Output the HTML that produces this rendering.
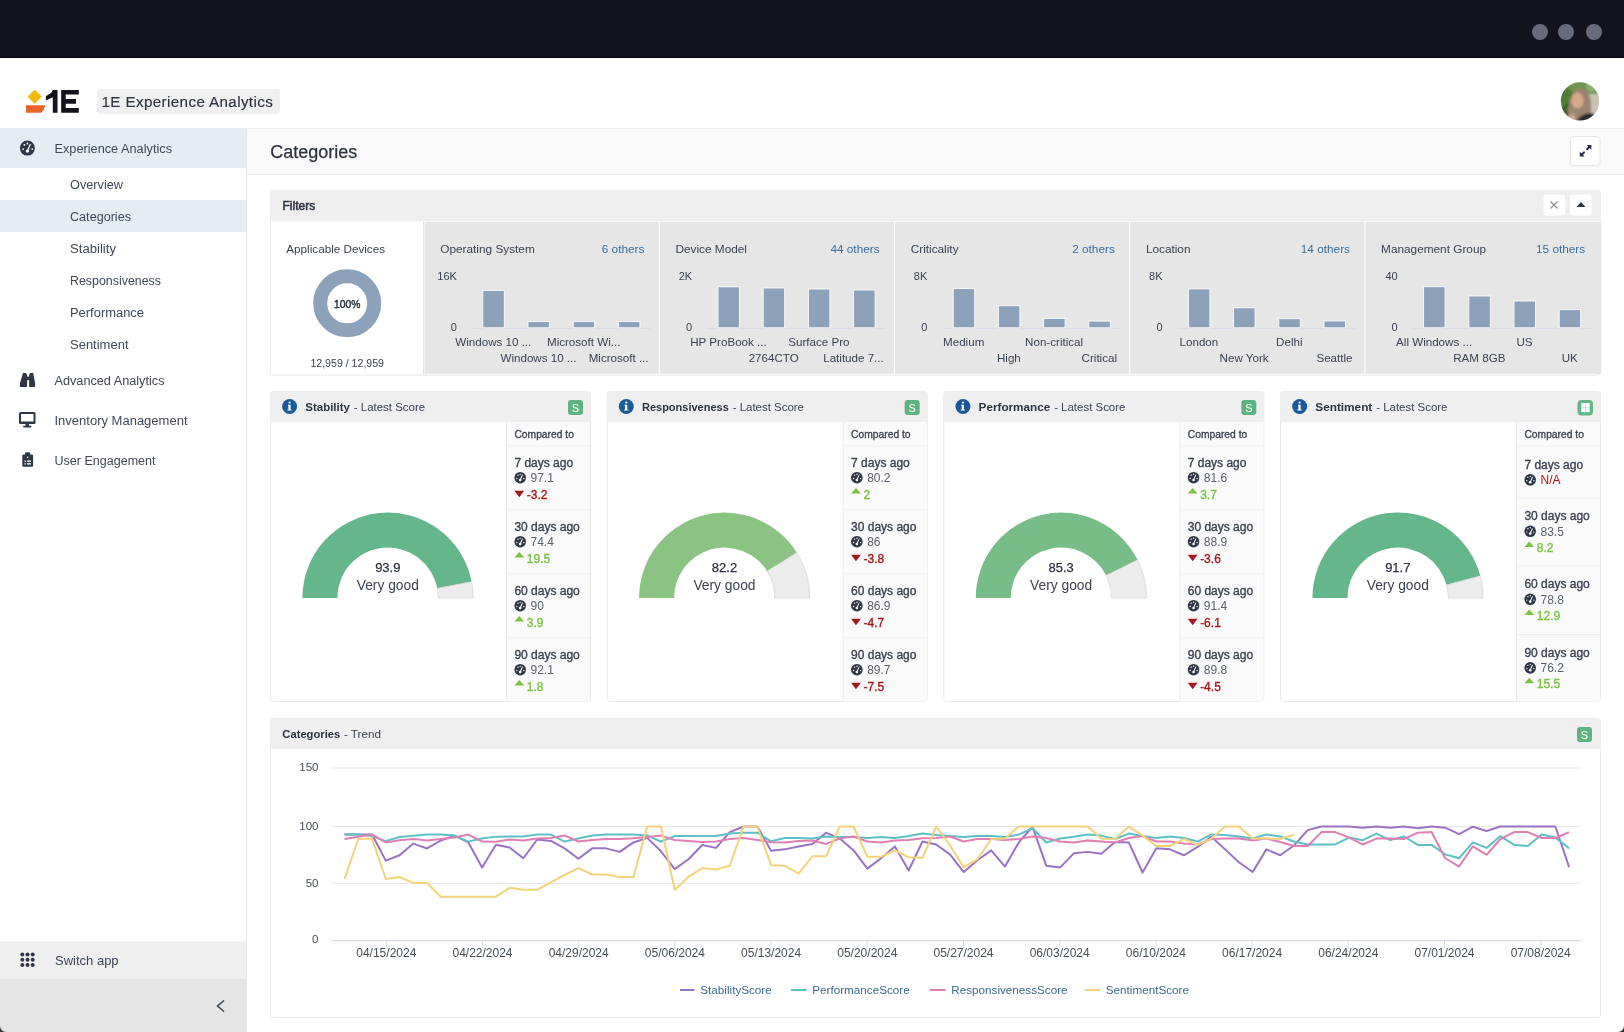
<!DOCTYPE html>
<html><head><meta charset="utf-8"><title>Categories</title>
<style>
*{margin:0;padding:0;box-sizing:border-box}
html,body{width:1624px;height:1032px;overflow:hidden;background:#fff}
svg{display:block;font-family:"Liberation Sans", sans-serif;will-change:transform}
</style></head><body>
<svg width="1624" height="1032" viewBox="0 0 1624 1032">
<rect x="0" y="0" width="1624" height="58" fill="#12131e" rx="0" />
<rect x="0" y="57" width="1624" height="1" fill="#070710" rx="0" />
<circle cx="1540" cy="32" r="8" fill="#676b7e"/>
<circle cx="1566" cy="32" r="8" fill="#676b7e"/>
<circle cx="1594" cy="32" r="8" fill="#676b7e"/>
<rect x="0" y="58" width="1624" height="70" fill="#ffffff" rx="0" />
<polygon points="34.7,90 41.3,96.7 34.7,103.4 28.1,96.7" fill="#f8b80a" stroke="#f8b80a" stroke-width="0.8" stroke-linejoin="round"/>
<path d="M26,105.3 H44.9 V106.5 Q44.5,110 41,112.7 H26 Z" fill="#e6632a"/>
<polygon points="45.9,96.3 51.5,92.5 52.8,90 57.5,90 57.5,112.7 52.8,112.7 52.8,97.2 45.9,100.4" fill="#13131d"/>
<path d="M61.2,90 H78.8 V94.6 H65.7 V99.1 H76 V103.8 H65.7 V108.1 H78.8 V112.7 H61.2 Z" fill="#13131d"/>
<rect x="97" y="89" width="183" height="25" fill="#f0f0f0" rx="4" />
<text x="101.5" y="107.3" font-size="15.2" fill="#2d3340" font-weight="400" text-anchor="start" stroke="#2d3340" stroke-width="0.15" letter-spacing="0.38">1E Experience Analytics</text>
<defs><clipPath id="av"><circle cx="1580" cy="101.4" r="19.2"/></clipPath>
<filter id="blur1"><feGaussianBlur stdDeviation="1.1"/></filter></defs>
<g clip-path="url(#av)"><g filter="url(#blur1)">
<rect x="1555" y="76" width="50" height="50" fill="#6d9650"/>
<circle cx="1566" cy="96" r="8" fill="#4f7d34"/><circle cx="1568" cy="110" r="7" fill="#3c6428"/>
<circle cx="1592" cy="86" r="6" fill="#8fae6a"/><rect x="1589" y="94" width="12" height="22" fill="#c8c2b3"/>
<path d="M1568,122 Q1566,96 1578,88 Q1590,88 1591,104 Q1592,118 1586,122 Z" fill="#9c8270"/>
<ellipse cx="1577.5" cy="100.5" rx="6" ry="8" fill="#d2aa8c"/>
<path d="M1574,126 Q1578,114 1590,113 Q1600,114 1601,126 Z" fill="#2f2b2e"/>
<path d="M1566,126 Q1568,114 1574,113 L1578,126 Z" fill="#c2a893"/>
</g></g>
<rect x="0" y="128" width="246" height="904" fill="#ffffff" rx="0" />
<rect x="246" y="128" width="1" height="904" fill="#e8e8e8" rx="0" />
<rect x="0" y="128" width="246" height="40" fill="#e5ecf3" rx="0" />
<rect x="0" y="200" width="246" height="32" fill="#e5ecf3" rx="0" />
<text x="54.5" y="153" font-size="12.5" fill="#3f4858" font-weight="400" text-anchor="start" textLength="117.5" lengthAdjust="spacingAndGlyphs" >Experience Analytics</text>
<text x="70" y="189.4" font-size="12.5" fill="#3f4858" font-weight="400" text-anchor="start" textLength="53" lengthAdjust="spacingAndGlyphs" >Overview</text>
<text x="70" y="221.4" font-size="12.5" fill="#3f4858" font-weight="400" text-anchor="start" textLength="61" lengthAdjust="spacingAndGlyphs" >Categories</text>
<text x="70" y="253.4" font-size="12.5" fill="#3f4858" font-weight="400" text-anchor="start" textLength="46" lengthAdjust="spacingAndGlyphs" >Stability</text>
<text x="70" y="285.4" font-size="12.5" fill="#3f4858" font-weight="400" text-anchor="start" textLength="91" lengthAdjust="spacingAndGlyphs" >Responsiveness</text>
<text x="70" y="317.4" font-size="12.5" fill="#3f4858" font-weight="400" text-anchor="start" textLength="74" lengthAdjust="spacingAndGlyphs" >Performance</text>
<text x="70" y="349.4" font-size="12.5" fill="#3f4858" font-weight="400" text-anchor="start" textLength="58.5" lengthAdjust="spacingAndGlyphs" >Sentiment</text>
<text x="54.5" y="385" font-size="12.5" fill="#3f4858" font-weight="400" text-anchor="start" textLength="110" lengthAdjust="spacingAndGlyphs" >Advanced Analytics</text>
<text x="54.5" y="425" font-size="12.5" fill="#3f4858" font-weight="400" text-anchor="start" textLength="133" lengthAdjust="spacingAndGlyphs" >Inventory Management</text>
<text x="54.5" y="465" font-size="12.5" fill="#3f4858" font-weight="400" text-anchor="start" textLength="101" lengthAdjust="spacingAndGlyphs" >User Engagement</text>
<g transform="translate(27.4,148.1) scale(1.0)"><circle r="7.5" fill="#2f3747"/><circle cx="-4.3" cy="1" r="0.9" fill="#fff"/><circle cx="-3" cy="-3.3" r="0.9" fill="#fff"/><circle cx="0" cy="-4.6" r="0.9" fill="#fff"/><circle cx="4.8" cy="1" r="0.9" fill="#fff"/><path d="M2.8,-3.5 L0.6,1.6" stroke="#fff" stroke-width="1.3" stroke-linecap="round"/><circle cx="0" cy="3" r="1.7" fill="#fff"/></g>
<g fill="#2f3747"><path d="M23,373 h3.2 l0.9,2.2 V387 h-7.1 V383 z"/><path d="M29.1,375.2 l0.9,-2.2 h3.2 l1.9,10 V387 h-6 z"/><rect x="26.8" y="376.6" width="2.6" height="3.6"/></g>
<g fill="#2f3747"><rect x="19" y="412" width="16.5" height="12" rx="1.5"/><rect x="21" y="414" width="12.5" height="7.5" fill="#fff"/><rect x="25.5" y="424" width="3.5" height="2"/><rect x="23" y="425.8" width="8.5" height="1.6" rx="0.8"/></g>
<g><rect x="22.3" y="454.5" width="10.8" height="12.2" rx="1.2" fill="#2f3747"/><rect x="25.2" y="452.2" width="5" height="3.5" rx="1.2" fill="#2f3747"/><g fill="#fff"><rect x="24.5" y="460.5" width="1.3" height="1.3"/><rect x="27" y="460.5" width="4" height="1.3"/><rect x="24.5" y="463.2" width="1.3" height="1.3"/><rect x="27" y="463.2" width="4" height="1.3"/><rect x="27.2" y="456.5" width="1" height="1.6"/></g></g>
<rect x="0" y="941.5" width="246" height="37" fill="#efefef" rx="0" />
<rect x="0" y="978.5" width="246" height="53.5" fill="#e5e5e5" rx="0" />
<circle cx="22.3" cy="954.5" r="2" fill="#2f3747"/>
<circle cx="27.5" cy="954.5" r="2" fill="#2f3747"/>
<circle cx="32.7" cy="954.5" r="2" fill="#2f3747"/>
<circle cx="22.3" cy="959.7" r="2" fill="#2f3747"/>
<circle cx="27.5" cy="959.7" r="2" fill="#2f3747"/>
<circle cx="32.7" cy="959.7" r="2" fill="#2f3747"/>
<circle cx="22.3" cy="964.9" r="2" fill="#2f3747"/>
<circle cx="27.5" cy="964.9" r="2" fill="#2f3747"/>
<circle cx="32.7" cy="964.9" r="2" fill="#2f3747"/>
<text x="55" y="965" font-size="13" fill="#3f4858" font-weight="400" text-anchor="start" >Switch app</text>
<path d="M224,1000.5 L217.5,1006 L224,1011.5" fill="none" stroke="#3a4250" stroke-width="1.5"/>
<rect x="247" y="128" width="1377" height="47" fill="#f9f9f9" rx="0" />
<rect x="247" y="128" width="1377" height="1" fill="#ececec" rx="0" />
<rect x="247" y="174" width="1377" height="1" fill="#e6e6e6" rx="0" />
<text x="270.3" y="158.2" font-size="18" fill="#2d3340" font-weight="400" text-anchor="start" stroke="#2d3340" stroke-width="0.25" >Categories</text>
<rect x="1570.5" y="136.5" width="29.5" height="29" fill="#ffffff" rx="3" stroke="#e6e6e6" stroke-width="1"/>
<g fill="#262a44"><polygon points="1586.6,145 1591.4,145 1591.4,149.8"/><polygon points="1579.8,151.8 1579.8,156.6 1584.6,156.6"/><path d="M1589.6,146.8 L1587.2,149.2 M1581.6,154.8 L1584,152.4" stroke="#262a44" stroke-width="2" stroke-linecap="round"/></g>
<!--MAIN-->
<rect x="270.5" y="190.5" width="1330" height="184.6" rx="3" fill="#fff" stroke="#e9e9e9"/>
<path d="M270,193 a3,3 0 0 1 3,-3 H1598 a3,3 0 0 1 3,3 V221.5 H270 Z" fill="#efefef"/>
<text x="282.5" y="209.5" font-size="12" fill="#2d3340" font-weight="400" text-anchor="start" stroke="#2d3340" stroke-width="0.55" >Filters</text>
<rect x="1543.5" y="194.5" width="21.5" height="21" fill="#ffffff" rx="3" />
<path d="M1550.5,201.5 L1557.5,208.5 M1557.5,201.5 L1550.5,208.5" stroke="#8a8a8a" stroke-width="1.1"/>
<rect x="1570" y="194.5" width="21.5" height="21" fill="#ffffff" rx="3" />
<polygon points="1576.5,207 1585.5,207 1581,202" fill="#2d3340"/>
<text x="286.3" y="253.3" font-size="11.7" fill="#3b4250" font-weight="400" text-anchor="start" >Applicable Devices</text>
<circle cx="347.2" cy="303.3" r="27" fill="none" stroke="#8ca2bb" stroke-width="14"/>
<text x="347.2" y="308" font-size="10.3" fill="#2d3340" font-weight="400" text-anchor="middle" stroke="#2d3340" stroke-width="0.45" >100%</text>
<text x="347.2" y="366.5" font-size="10.6" fill="#3b4250" font-weight="400" text-anchor="middle" >12,959 / 12,959</text>
<rect x="424.60" y="222" width="234.2" height="151.8" fill="#e6e6e6" rx="0" />
<rect x="423.1" y="222" width="1" height="152" fill="#e2e2e2" rx="0" />
<text x="440.3" y="252.9" font-size="11.8" fill="#3b4250" font-weight="400" text-anchor="start" >Operating System</text>
<text x="644.4000000000001" y="252.9" font-size="11.8" fill="#3a6f9f" font-weight="400" text-anchor="end" >6 others</text>
<text x="456.90000000000003" y="280.2" font-size="11" fill="#3b4250" font-weight="400" text-anchor="end" >16K</text>
<text x="456.90000000000003" y="330.5" font-size="11" fill="#3b4250" font-weight="400" text-anchor="end" >0</text>
<rect x="472.1" y="327.8" width="178.5" height="1" fill="#d6dce6" rx="0" />
<rect x="482.80" y="290.60" width="21.5" height="37.20" fill="#8ca2bb" stroke="#fbfcff" stroke-width="0.9"/>
<text x="493.30" y="346" font-size="11.6" fill="#3b4250" font-weight="400" text-anchor="middle" >Windows 10 ...</text>
<rect x="528.00" y="321.60" width="21.5" height="6.20" fill="#8ca2bb" stroke="#fbfcff" stroke-width="0.9"/>
<text x="538.50" y="361.5" font-size="11.6" fill="#3b4250" font-weight="400" text-anchor="middle" >Windows 10 ...</text>
<rect x="573.20" y="321.60" width="21.5" height="6.20" fill="#8ca2bb" stroke="#fbfcff" stroke-width="0.9"/>
<text x="583.70" y="346" font-size="11.6" fill="#3b4250" font-weight="400" text-anchor="middle" >Microsoft Wi...</text>
<rect x="618.40" y="321.60" width="21.5" height="6.20" fill="#8ca2bb" stroke="#fbfcff" stroke-width="0.9"/>
<text x="618.63" y="361.5" font-size="11.6" fill="#3b4250" font-weight="400" text-anchor="middle" >Microsoft ...</text>
<rect x="659.80" y="222" width="234.2" height="151.8" fill="#e6e6e6" rx="0" />
<text x="675.5" y="252.9" font-size="11.8" fill="#3b4250" font-weight="400" text-anchor="start" >Device Model</text>
<text x="879.5999999999999" y="252.9" font-size="11.8" fill="#3a6f9f" font-weight="400" text-anchor="end" >44 others</text>
<text x="692.0999999999999" y="280.2" font-size="11" fill="#3b4250" font-weight="400" text-anchor="end" >2K</text>
<text x="692.0999999999999" y="330.5" font-size="11" fill="#3b4250" font-weight="400" text-anchor="end" >0</text>
<rect x="707.3" y="327.8" width="178.5" height="1" fill="#d6dce6" rx="0" />
<rect x="718.00" y="286.80" width="21.5" height="41.00" fill="#8ca2bb" stroke="#fbfcff" stroke-width="0.9"/>
<text x="728.50" y="346" font-size="11.6" fill="#3b4250" font-weight="400" text-anchor="middle" >HP ProBook ...</text>
<rect x="763.20" y="288.00" width="21.5" height="39.80" fill="#8ca2bb" stroke="#fbfcff" stroke-width="0.9"/>
<text x="773.70" y="361.5" font-size="11.6" fill="#3b4250" font-weight="400" text-anchor="middle" >2764CTO</text>
<rect x="808.40" y="289.00" width="21.5" height="38.80" fill="#8ca2bb" stroke="#fbfcff" stroke-width="0.9"/>
<text x="818.90" y="346" font-size="11.6" fill="#3b4250" font-weight="400" text-anchor="middle" >Surface Pro</text>
<rect x="853.60" y="290.00" width="21.5" height="37.80" fill="#8ca2bb" stroke="#fbfcff" stroke-width="0.9"/>
<text x="853.49" y="361.5" font-size="11.6" fill="#3b4250" font-weight="400" text-anchor="middle" >Latitude 7...</text>
<rect x="895.00" y="222" width="234.2" height="151.8" fill="#e6e6e6" rx="0" />
<text x="910.7" y="252.9" font-size="11.8" fill="#3b4250" font-weight="400" text-anchor="start" >Criticality</text>
<text x="1114.8" y="252.9" font-size="11.8" fill="#3a6f9f" font-weight="400" text-anchor="end" >2 others</text>
<text x="927.3" y="280.2" font-size="11" fill="#3b4250" font-weight="400" text-anchor="end" >8K</text>
<text x="927.3" y="330.5" font-size="11" fill="#3b4250" font-weight="400" text-anchor="end" >0</text>
<rect x="942.5" y="327.8" width="178.5" height="1" fill="#d6dce6" rx="0" />
<rect x="953.20" y="288.60" width="21.5" height="39.20" fill="#8ca2bb" stroke="#fbfcff" stroke-width="0.9"/>
<text x="963.70" y="346" font-size="11.6" fill="#3b4250" font-weight="400" text-anchor="middle" >Medium</text>
<rect x="998.40" y="305.70" width="21.5" height="22.10" fill="#8ca2bb" stroke="#fbfcff" stroke-width="0.9"/>
<text x="1008.90" y="361.5" font-size="11.6" fill="#3b4250" font-weight="400" text-anchor="middle" >High</text>
<rect x="1043.60" y="318.40" width="21.5" height="9.40" fill="#8ca2bb" stroke="#fbfcff" stroke-width="0.9"/>
<text x="1054.10" y="346" font-size="11.6" fill="#3b4250" font-weight="400" text-anchor="middle" >Non-critical</text>
<rect x="1088.80" y="321.10" width="21.5" height="6.70" fill="#8ca2bb" stroke="#fbfcff" stroke-width="0.9"/>
<text x="1099.30" y="361.5" font-size="11.6" fill="#3b4250" font-weight="400" text-anchor="middle" >Critical</text>
<rect x="1130.20" y="222" width="234.2" height="151.8" fill="#e6e6e6" rx="0" />
<text x="1145.8999999999999" y="252.9" font-size="11.8" fill="#3b4250" font-weight="400" text-anchor="start" >Location</text>
<text x="1349.9999999999998" y="252.9" font-size="11.8" fill="#3a6f9f" font-weight="400" text-anchor="end" >14 others</text>
<text x="1162.4999999999998" y="280.2" font-size="11" fill="#3b4250" font-weight="400" text-anchor="end" >8K</text>
<text x="1162.4999999999998" y="330.5" font-size="11" fill="#3b4250" font-weight="400" text-anchor="end" >0</text>
<rect x="1177.6999999999998" y="327.8" width="178.5" height="1" fill="#d6dce6" rx="0" />
<rect x="1188.40" y="288.90" width="21.5" height="38.90" fill="#8ca2bb" stroke="#fbfcff" stroke-width="0.9"/>
<text x="1198.90" y="346" font-size="11.6" fill="#3b4250" font-weight="400" text-anchor="middle" >London</text>
<rect x="1233.60" y="307.80" width="21.5" height="20.00" fill="#8ca2bb" stroke="#fbfcff" stroke-width="0.9"/>
<text x="1244.10" y="361.5" font-size="11.6" fill="#3b4250" font-weight="400" text-anchor="middle" >New York</text>
<rect x="1278.80" y="318.70" width="21.5" height="9.10" fill="#8ca2bb" stroke="#fbfcff" stroke-width="0.9"/>
<text x="1289.30" y="346" font-size="11.6" fill="#3b4250" font-weight="400" text-anchor="middle" >Delhi</text>
<rect x="1324.00" y="320.90" width="21.5" height="6.90" fill="#8ca2bb" stroke="#fbfcff" stroke-width="0.9"/>
<text x="1334.50" y="361.5" font-size="11.6" fill="#3b4250" font-weight="400" text-anchor="middle" >Seattle</text>
<rect x="1365.40" y="222" width="236" height="151.8" fill="#e6e6e6" rx="0" />
<text x="1381.1000000000001" y="252.9" font-size="11.8" fill="#3b4250" font-weight="400" text-anchor="start" >Management Group</text>
<text x="1585.2" y="252.9" font-size="11.8" fill="#3a6f9f" font-weight="400" text-anchor="end" >15 others</text>
<text x="1397.7" y="280.2" font-size="11" fill="#3b4250" font-weight="400" text-anchor="end" >40</text>
<text x="1397.7" y="330.5" font-size="11" fill="#3b4250" font-weight="400" text-anchor="end" >0</text>
<rect x="1412.9" y="327.8" width="178.5" height="1" fill="#d6dce6" rx="0" />
<rect x="1423.60" y="286.70" width="21.5" height="41.10" fill="#8ca2bb" stroke="#fbfcff" stroke-width="0.9"/>
<text x="1434.10" y="346" font-size="11.6" fill="#3b4250" font-weight="400" text-anchor="middle" >All Windows ...</text>
<rect x="1468.80" y="296.00" width="21.5" height="31.80" fill="#8ca2bb" stroke="#fbfcff" stroke-width="0.9"/>
<text x="1479.30" y="361.5" font-size="11.6" fill="#3b4250" font-weight="400" text-anchor="middle" >RAM 8GB</text>
<rect x="1514.00" y="301.00" width="21.5" height="26.80" fill="#8ca2bb" stroke="#fbfcff" stroke-width="0.9"/>
<text x="1524.50" y="346" font-size="11.6" fill="#3b4250" font-weight="400" text-anchor="middle" >US</text>
<rect x="1559.20" y="309.70" width="21.5" height="18.10" fill="#8ca2bb" stroke="#fbfcff" stroke-width="0.9"/>
<text x="1569.70" y="361.5" font-size="11.6" fill="#3b4250" font-weight="400" text-anchor="middle" >UK</text>
<rect x="270.50" y="391.5" width="320" height="310" rx="3" fill="#fff" stroke="#e9e9e9"/>
<path d="M270.00,394.5 a3,3 0 0 1 3,-3 H588.00 a3,3 0 0 1 3,3 V422.2 H270.00 Z" fill="#efefef"/>
<circle cx="289.60" cy="406.5" r="7.5" fill="#1b5a98"/>
<g fill="#fff"><circle cx="289.60" cy="402.6" r="1.1"/><path d="M288.00,404.8 h2.6 v4.6 h1 v1.2 h-4.2 v-1.2 h1 v-3.4 h-0.4 z"/></g>
<text x="305.30" y="411.2" font-size="11.6" fill="#2d3340" font-weight="700" text-anchor="start" textLength="44.6" lengthAdjust="spacingAndGlyphs" >Stability</text>
<text x="353.80" y="411.2" font-size="11.75" fill="#3b4250" font-weight="400" text-anchor="start" textLength="71.3" lengthAdjust="spacingAndGlyphs" >- Latest Score</text>
<rect x="568.00" y="400" width="15" height="15" fill="#5fb383" rx="3" />
<text x="575.50" y="411.8" font-size="11" fill="#ffffff" font-weight="400" text-anchor="middle" >S</text>
<path d="M302.40,598 A85.4,85.4 0 0 1 471.64,581.73 L437.28,588.40 A50.4,50.4 0 0 0 337.40,598 Z" fill="#65b68b"/>
<path d="M471.64,581.73 A85.4,85.4 0 0 1 473.20,598 L438.20,598 A50.4,50.4 0 0 0 437.28,588.40 Z" fill="#ececec" stroke="#d9d9de" stroke-width="0.8"/>
<text x="387.80" y="571.5" font-size="13" fill="#2d3340" font-weight="400" text-anchor="middle" stroke="#2d3340" stroke-width="0.25" >93.9</text>
<text x="387.80" y="589.5" font-size="13.8" fill="#3b4250" font-weight="400" text-anchor="middle" >Very good</text>
<rect x="506.00" y="422.2" width="84" height="279.3" fill="#fafafa" rx="0" />
<rect x="506.00" y="422.2" width="1" height="279.3" fill="#ececec" rx="0" />
<text x="514.40" y="437.6" font-size="10.3" fill="#3b4250" font-weight="400" text-anchor="start" stroke="#3b4250" stroke-width="0.3" >Compared to</text>
<rect x="507.00" y="445.5" width="83" height="1" fill="#efefef" rx="0" />
<rect x="507.00" y="509.5" width="83" height="1" fill="#efefef" rx="0" />
<rect x="507.00" y="573.5" width="83" height="1" fill="#efefef" rx="0" />
<rect x="507.00" y="637.5" width="83" height="1" fill="#efefef" rx="0" />
<text x="514.40" y="466.5" font-size="12" fill="#3b4250" font-weight="400" text-anchor="start" stroke="#3b4250" stroke-width="0.35" >7 days ago</text>
<g transform="translate(520.2,477.7) scale(0.7733333333333333)"><circle r="7.5" fill="#2f3747"/><circle cx="-4.3" cy="1" r="0.9" fill="#fff"/><circle cx="-3" cy="-3.3" r="0.9" fill="#fff"/><circle cx="0" cy="-4.6" r="0.9" fill="#fff"/><circle cx="4.8" cy="1" r="0.9" fill="#fff"/><path d="M2.8,-3.5 L0.6,1.6" stroke="#fff" stroke-width="1.3" stroke-linecap="round"/><circle cx="0" cy="3" r="1.7" fill="#fff"/></g>
<text x="530.50" y="482.0" font-size="12" fill="#5a6270" font-weight="400" text-anchor="start" >97.1</text>
<polygon points="514.40,490.70 524.20,490.70 519.30,497.30" fill="#a3191d"/>
<text x="526.80" y="498.5" font-size="12" fill="#a3191d" font-weight="400" text-anchor="start" stroke="#a3191d" stroke-width="0.35" >-3.2</text>
<text x="514.40" y="530.5" font-size="12" fill="#3b4250" font-weight="400" text-anchor="start" stroke="#3b4250" stroke-width="0.35" >30 days ago</text>
<g transform="translate(520.2,541.7) scale(0.7733333333333333)"><circle r="7.5" fill="#2f3747"/><circle cx="-4.3" cy="1" r="0.9" fill="#fff"/><circle cx="-3" cy="-3.3" r="0.9" fill="#fff"/><circle cx="0" cy="-4.6" r="0.9" fill="#fff"/><circle cx="4.8" cy="1" r="0.9" fill="#fff"/><path d="M2.8,-3.5 L0.6,1.6" stroke="#fff" stroke-width="1.3" stroke-linecap="round"/><circle cx="0" cy="3" r="1.7" fill="#fff"/></g>
<text x="530.50" y="546.0" font-size="12" fill="#5a6270" font-weight="400" text-anchor="start" >74.4</text>
<polygon points="514.40,557.50 524.20,557.50 519.30,552.00" fill="#7cc142"/>
<text x="526.80" y="562.5" font-size="12" fill="#7cc142" font-weight="400" text-anchor="start" stroke="#7cc142" stroke-width="0.35" >19.5</text>
<text x="514.40" y="594.5" font-size="12" fill="#3b4250" font-weight="400" text-anchor="start" stroke="#3b4250" stroke-width="0.35" >60 days ago</text>
<g transform="translate(520.2,605.7) scale(0.7733333333333333)"><circle r="7.5" fill="#2f3747"/><circle cx="-4.3" cy="1" r="0.9" fill="#fff"/><circle cx="-3" cy="-3.3" r="0.9" fill="#fff"/><circle cx="0" cy="-4.6" r="0.9" fill="#fff"/><circle cx="4.8" cy="1" r="0.9" fill="#fff"/><path d="M2.8,-3.5 L0.6,1.6" stroke="#fff" stroke-width="1.3" stroke-linecap="round"/><circle cx="0" cy="3" r="1.7" fill="#fff"/></g>
<text x="530.50" y="610.0" font-size="12" fill="#5a6270" font-weight="400" text-anchor="start" >90</text>
<polygon points="514.40,621.50 524.20,621.50 519.30,616.00" fill="#7cc142"/>
<text x="526.80" y="626.5" font-size="12" fill="#7cc142" font-weight="400" text-anchor="start" stroke="#7cc142" stroke-width="0.35" >3.9</text>
<text x="514.40" y="658.5" font-size="12" fill="#3b4250" font-weight="400" text-anchor="start" stroke="#3b4250" stroke-width="0.35" >90 days ago</text>
<g transform="translate(520.2,669.7) scale(0.7733333333333333)"><circle r="7.5" fill="#2f3747"/><circle cx="-4.3" cy="1" r="0.9" fill="#fff"/><circle cx="-3" cy="-3.3" r="0.9" fill="#fff"/><circle cx="0" cy="-4.6" r="0.9" fill="#fff"/><circle cx="4.8" cy="1" r="0.9" fill="#fff"/><path d="M2.8,-3.5 L0.6,1.6" stroke="#fff" stroke-width="1.3" stroke-linecap="round"/><circle cx="0" cy="3" r="1.7" fill="#fff"/></g>
<text x="530.50" y="674.0" font-size="12" fill="#5a6270" font-weight="400" text-anchor="start" >92.1</text>
<polygon points="514.40,685.50 524.20,685.50 519.30,680.00" fill="#7cc142"/>
<text x="526.80" y="690.5" font-size="12" fill="#7cc142" font-weight="400" text-anchor="start" stroke="#7cc142" stroke-width="0.35" >1.8</text>
<rect x="607.17" y="391.5" width="320" height="310" rx="3" fill="#fff" stroke="#e9e9e9"/>
<path d="M606.67,394.5 a3,3 0 0 1 3,-3 H924.67 a3,3 0 0 1 3,3 V422.2 H606.67 Z" fill="#efefef"/>
<circle cx="626.27" cy="406.5" r="7.5" fill="#1b5a98"/>
<g fill="#fff"><circle cx="626.27" cy="402.6" r="1.1"/><path d="M624.67,404.8 h2.6 v4.6 h1 v1.2 h-4.2 v-1.2 h1 v-3.4 h-0.4 z"/></g>
<text x="641.97" y="411.2" font-size="11.6" fill="#2d3340" font-weight="700" text-anchor="start" textLength="86.8" lengthAdjust="spacingAndGlyphs" >Responsiveness</text>
<text x="732.67" y="411.2" font-size="11.75" fill="#3b4250" font-weight="400" text-anchor="start" textLength="71.3" lengthAdjust="spacingAndGlyphs" >- Latest Score</text>
<rect x="904.67" y="400" width="15" height="15" fill="#5fb383" rx="3" />
<text x="912.17" y="411.8" font-size="11" fill="#ffffff" font-weight="400" text-anchor="middle" >S</text>
<path d="M639.07,598 A85.4,85.4 0 0 1 796.86,552.69 L767.19,571.26 A50.4,50.4 0 0 0 674.07,598 Z" fill="#8bc383"/>
<path d="M796.86,552.69 A85.4,85.4 0 0 1 809.87,598 L774.87,598 A50.4,50.4 0 0 0 767.19,571.26 Z" fill="#ececec" stroke="#d9d9de" stroke-width="0.8"/>
<text x="724.47" y="571.5" font-size="13" fill="#2d3340" font-weight="400" text-anchor="middle" stroke="#2d3340" stroke-width="0.25" >82.2</text>
<text x="724.47" y="589.5" font-size="13.8" fill="#3b4250" font-weight="400" text-anchor="middle" >Very good</text>
<rect x="842.67" y="422.2" width="84" height="279.3" fill="#fafafa" rx="0" />
<rect x="842.67" y="422.2" width="1" height="279.3" fill="#ececec" rx="0" />
<text x="851.07" y="437.6" font-size="10.3" fill="#3b4250" font-weight="400" text-anchor="start" stroke="#3b4250" stroke-width="0.3" >Compared to</text>
<rect x="843.67" y="445.5" width="83" height="1" fill="#efefef" rx="0" />
<rect x="843.67" y="509.5" width="83" height="1" fill="#efefef" rx="0" />
<rect x="843.67" y="573.5" width="83" height="1" fill="#efefef" rx="0" />
<rect x="843.67" y="637.5" width="83" height="1" fill="#efefef" rx="0" />
<text x="851.07" y="466.5" font-size="12" fill="#3b4250" font-weight="400" text-anchor="start" stroke="#3b4250" stroke-width="0.35" >7 days ago</text>
<g transform="translate(856.8700000000001,477.7) scale(0.7733333333333333)"><circle r="7.5" fill="#2f3747"/><circle cx="-4.3" cy="1" r="0.9" fill="#fff"/><circle cx="-3" cy="-3.3" r="0.9" fill="#fff"/><circle cx="0" cy="-4.6" r="0.9" fill="#fff"/><circle cx="4.8" cy="1" r="0.9" fill="#fff"/><path d="M2.8,-3.5 L0.6,1.6" stroke="#fff" stroke-width="1.3" stroke-linecap="round"/><circle cx="0" cy="3" r="1.7" fill="#fff"/></g>
<text x="867.17" y="482.0" font-size="12" fill="#5a6270" font-weight="400" text-anchor="start" >80.2</text>
<polygon points="851.07,493.50 860.87,493.50 855.97,488.00" fill="#7cc142"/>
<text x="863.47" y="498.5" font-size="12" fill="#7cc142" font-weight="400" text-anchor="start" stroke="#7cc142" stroke-width="0.35" >2</text>
<text x="851.07" y="530.5" font-size="12" fill="#3b4250" font-weight="400" text-anchor="start" stroke="#3b4250" stroke-width="0.35" >30 days ago</text>
<g transform="translate(856.8700000000001,541.7) scale(0.7733333333333333)"><circle r="7.5" fill="#2f3747"/><circle cx="-4.3" cy="1" r="0.9" fill="#fff"/><circle cx="-3" cy="-3.3" r="0.9" fill="#fff"/><circle cx="0" cy="-4.6" r="0.9" fill="#fff"/><circle cx="4.8" cy="1" r="0.9" fill="#fff"/><path d="M2.8,-3.5 L0.6,1.6" stroke="#fff" stroke-width="1.3" stroke-linecap="round"/><circle cx="0" cy="3" r="1.7" fill="#fff"/></g>
<text x="867.17" y="546.0" font-size="12" fill="#5a6270" font-weight="400" text-anchor="start" >86</text>
<polygon points="851.07,554.70 860.87,554.70 855.97,561.30" fill="#a3191d"/>
<text x="863.47" y="562.5" font-size="12" fill="#a3191d" font-weight="400" text-anchor="start" stroke="#a3191d" stroke-width="0.35" >-3.8</text>
<text x="851.07" y="594.5" font-size="12" fill="#3b4250" font-weight="400" text-anchor="start" stroke="#3b4250" stroke-width="0.35" >60 days ago</text>
<g transform="translate(856.8700000000001,605.7) scale(0.7733333333333333)"><circle r="7.5" fill="#2f3747"/><circle cx="-4.3" cy="1" r="0.9" fill="#fff"/><circle cx="-3" cy="-3.3" r="0.9" fill="#fff"/><circle cx="0" cy="-4.6" r="0.9" fill="#fff"/><circle cx="4.8" cy="1" r="0.9" fill="#fff"/><path d="M2.8,-3.5 L0.6,1.6" stroke="#fff" stroke-width="1.3" stroke-linecap="round"/><circle cx="0" cy="3" r="1.7" fill="#fff"/></g>
<text x="867.17" y="610.0" font-size="12" fill="#5a6270" font-weight="400" text-anchor="start" >86.9</text>
<polygon points="851.07,618.70 860.87,618.70 855.97,625.30" fill="#a3191d"/>
<text x="863.47" y="626.5" font-size="12" fill="#a3191d" font-weight="400" text-anchor="start" stroke="#a3191d" stroke-width="0.35" >-4.7</text>
<text x="851.07" y="658.5" font-size="12" fill="#3b4250" font-weight="400" text-anchor="start" stroke="#3b4250" stroke-width="0.35" >90 days ago</text>
<g transform="translate(856.8700000000001,669.7) scale(0.7733333333333333)"><circle r="7.5" fill="#2f3747"/><circle cx="-4.3" cy="1" r="0.9" fill="#fff"/><circle cx="-3" cy="-3.3" r="0.9" fill="#fff"/><circle cx="0" cy="-4.6" r="0.9" fill="#fff"/><circle cx="4.8" cy="1" r="0.9" fill="#fff"/><path d="M2.8,-3.5 L0.6,1.6" stroke="#fff" stroke-width="1.3" stroke-linecap="round"/><circle cx="0" cy="3" r="1.7" fill="#fff"/></g>
<text x="867.17" y="674.0" font-size="12" fill="#5a6270" font-weight="400" text-anchor="start" >89.7</text>
<polygon points="851.07,682.70 860.87,682.70 855.97,689.30" fill="#a3191d"/>
<text x="863.47" y="690.5" font-size="12" fill="#a3191d" font-weight="400" text-anchor="start" stroke="#a3191d" stroke-width="0.35" >-7.5</text>
<rect x="943.84" y="391.5" width="320" height="310" rx="3" fill="#fff" stroke="#e9e9e9"/>
<path d="M943.34,394.5 a3,3 0 0 1 3,-3 H1261.34 a3,3 0 0 1 3,3 V422.2 H943.34 Z" fill="#efefef"/>
<circle cx="962.94" cy="406.5" r="7.5" fill="#1b5a98"/>
<g fill="#fff"><circle cx="962.94" cy="402.6" r="1.1"/><path d="M961.34,404.8 h2.6 v4.6 h1 v1.2 h-4.2 v-1.2 h1 v-3.4 h-0.4 z"/></g>
<text x="978.64" y="411.2" font-size="11.6" fill="#2d3340" font-weight="700" text-anchor="start" textLength="71.6" lengthAdjust="spacingAndGlyphs" >Performance</text>
<text x="1054.14" y="411.2" font-size="11.75" fill="#3b4250" font-weight="400" text-anchor="start" textLength="71.3" lengthAdjust="spacingAndGlyphs" >- Latest Score</text>
<rect x="1241.34" y="400" width="15" height="15" fill="#5fb383" rx="3" />
<text x="1248.84" y="411.8" font-size="11" fill="#ffffff" font-weight="400" text-anchor="middle" >S</text>
<path d="M975.74,598 A85.4,85.4 0 0 1 1137.59,559.95 L1106.26,575.54 A50.4,50.4 0 0 0 1010.74,598 Z" fill="#78bc87"/>
<path d="M1137.59,559.95 A85.4,85.4 0 0 1 1146.54,598 L1111.54,598 A50.4,50.4 0 0 0 1106.26,575.54 Z" fill="#ececec" stroke="#d9d9de" stroke-width="0.8"/>
<text x="1061.14" y="571.5" font-size="13" fill="#2d3340" font-weight="400" text-anchor="middle" stroke="#2d3340" stroke-width="0.25" >85.3</text>
<text x="1061.14" y="589.5" font-size="13.8" fill="#3b4250" font-weight="400" text-anchor="middle" >Very good</text>
<rect x="1179.34" y="422.2" width="84" height="279.3" fill="#fafafa" rx="0" />
<rect x="1179.34" y="422.2" width="1" height="279.3" fill="#ececec" rx="0" />
<text x="1187.74" y="437.6" font-size="10.3" fill="#3b4250" font-weight="400" text-anchor="start" stroke="#3b4250" stroke-width="0.3" >Compared to</text>
<rect x="1180.34" y="445.5" width="83" height="1" fill="#efefef" rx="0" />
<rect x="1180.34" y="509.5" width="83" height="1" fill="#efefef" rx="0" />
<rect x="1180.34" y="573.5" width="83" height="1" fill="#efefef" rx="0" />
<rect x="1180.34" y="637.5" width="83" height="1" fill="#efefef" rx="0" />
<text x="1187.74" y="466.5" font-size="12" fill="#3b4250" font-weight="400" text-anchor="start" stroke="#3b4250" stroke-width="0.35" >7 days ago</text>
<g transform="translate(1193.5400000000002,477.7) scale(0.7733333333333333)"><circle r="7.5" fill="#2f3747"/><circle cx="-4.3" cy="1" r="0.9" fill="#fff"/><circle cx="-3" cy="-3.3" r="0.9" fill="#fff"/><circle cx="0" cy="-4.6" r="0.9" fill="#fff"/><circle cx="4.8" cy="1" r="0.9" fill="#fff"/><path d="M2.8,-3.5 L0.6,1.6" stroke="#fff" stroke-width="1.3" stroke-linecap="round"/><circle cx="0" cy="3" r="1.7" fill="#fff"/></g>
<text x="1203.84" y="482.0" font-size="12" fill="#5a6270" font-weight="400" text-anchor="start" >81.6</text>
<polygon points="1187.74,493.50 1197.54,493.50 1192.64,488.00" fill="#7cc142"/>
<text x="1200.14" y="498.5" font-size="12" fill="#7cc142" font-weight="400" text-anchor="start" stroke="#7cc142" stroke-width="0.35" >3.7</text>
<text x="1187.74" y="530.5" font-size="12" fill="#3b4250" font-weight="400" text-anchor="start" stroke="#3b4250" stroke-width="0.35" >30 days ago</text>
<g transform="translate(1193.5400000000002,541.7) scale(0.7733333333333333)"><circle r="7.5" fill="#2f3747"/><circle cx="-4.3" cy="1" r="0.9" fill="#fff"/><circle cx="-3" cy="-3.3" r="0.9" fill="#fff"/><circle cx="0" cy="-4.6" r="0.9" fill="#fff"/><circle cx="4.8" cy="1" r="0.9" fill="#fff"/><path d="M2.8,-3.5 L0.6,1.6" stroke="#fff" stroke-width="1.3" stroke-linecap="round"/><circle cx="0" cy="3" r="1.7" fill="#fff"/></g>
<text x="1203.84" y="546.0" font-size="12" fill="#5a6270" font-weight="400" text-anchor="start" >88.9</text>
<polygon points="1187.74,554.70 1197.54,554.70 1192.64,561.30" fill="#a3191d"/>
<text x="1200.14" y="562.5" font-size="12" fill="#a3191d" font-weight="400" text-anchor="start" stroke="#a3191d" stroke-width="0.35" >-3.6</text>
<text x="1187.74" y="594.5" font-size="12" fill="#3b4250" font-weight="400" text-anchor="start" stroke="#3b4250" stroke-width="0.35" >60 days ago</text>
<g transform="translate(1193.5400000000002,605.7) scale(0.7733333333333333)"><circle r="7.5" fill="#2f3747"/><circle cx="-4.3" cy="1" r="0.9" fill="#fff"/><circle cx="-3" cy="-3.3" r="0.9" fill="#fff"/><circle cx="0" cy="-4.6" r="0.9" fill="#fff"/><circle cx="4.8" cy="1" r="0.9" fill="#fff"/><path d="M2.8,-3.5 L0.6,1.6" stroke="#fff" stroke-width="1.3" stroke-linecap="round"/><circle cx="0" cy="3" r="1.7" fill="#fff"/></g>
<text x="1203.84" y="610.0" font-size="12" fill="#5a6270" font-weight="400" text-anchor="start" >91.4</text>
<polygon points="1187.74,618.70 1197.54,618.70 1192.64,625.30" fill="#a3191d"/>
<text x="1200.14" y="626.5" font-size="12" fill="#a3191d" font-weight="400" text-anchor="start" stroke="#a3191d" stroke-width="0.35" >-6.1</text>
<text x="1187.74" y="658.5" font-size="12" fill="#3b4250" font-weight="400" text-anchor="start" stroke="#3b4250" stroke-width="0.35" >90 days ago</text>
<g transform="translate(1193.5400000000002,669.7) scale(0.7733333333333333)"><circle r="7.5" fill="#2f3747"/><circle cx="-4.3" cy="1" r="0.9" fill="#fff"/><circle cx="-3" cy="-3.3" r="0.9" fill="#fff"/><circle cx="0" cy="-4.6" r="0.9" fill="#fff"/><circle cx="4.8" cy="1" r="0.9" fill="#fff"/><path d="M2.8,-3.5 L0.6,1.6" stroke="#fff" stroke-width="1.3" stroke-linecap="round"/><circle cx="0" cy="3" r="1.7" fill="#fff"/></g>
<text x="1203.84" y="674.0" font-size="12" fill="#5a6270" font-weight="400" text-anchor="start" >89.8</text>
<polygon points="1187.74,682.70 1197.54,682.70 1192.64,689.30" fill="#a3191d"/>
<text x="1200.14" y="690.5" font-size="12" fill="#a3191d" font-weight="400" text-anchor="start" stroke="#a3191d" stroke-width="0.35" >-4.5</text>
<rect x="1280.51" y="391.5" width="320" height="310" rx="3" fill="#fff" stroke="#e9e9e9"/>
<path d="M1280.01,394.5 a3,3 0 0 1 3,-3 H1598.01 a3,3 0 0 1 3,3 V422.2 H1280.01 Z" fill="#efefef"/>
<circle cx="1299.61" cy="406.5" r="7.5" fill="#1b5a98"/>
<g fill="#fff"><circle cx="1299.61" cy="402.6" r="1.1"/><path d="M1298.01,404.8 h2.6 v4.6 h1 v1.2 h-4.2 v-1.2 h1 v-3.4 h-0.4 z"/></g>
<text x="1315.31" y="411.2" font-size="11.6" fill="#2d3340" font-weight="700" text-anchor="start" textLength="57" lengthAdjust="spacingAndGlyphs" >Sentiment</text>
<text x="1376.21" y="411.2" font-size="11.75" fill="#3b4250" font-weight="400" text-anchor="start" textLength="71.3" lengthAdjust="spacingAndGlyphs" >- Latest Score</text>
<rect x="1577.51" y="400" width="15.5" height="15.5" fill="#62b585" rx="4" />
<rect x="1581.31" y="403" width="8.4" height="9.2" fill="#ffffff" rx="0" />
<rect x="1585.31" y="403" width="0.5" height="9.2" fill="#9fd3b5" rx="0" />
<rect x="1581.31" y="407.3" width="8.4" height="0.5" fill="#9fd3b5" rx="0" />
<path d="M1312.41,598 A85.4,85.4 0 0 1 1480.32,575.98 L1446.51,585.01 A50.4,50.4 0 0 0 1347.41,598 Z" fill="#65b68b"/>
<path d="M1480.32,575.98 A85.4,85.4 0 0 1 1483.21,598 L1448.21,598 A50.4,50.4 0 0 0 1446.51,585.01 Z" fill="#ececec" stroke="#d9d9de" stroke-width="0.8"/>
<text x="1397.81" y="571.5" font-size="13" fill="#2d3340" font-weight="400" text-anchor="middle" stroke="#2d3340" stroke-width="0.25" >91.7</text>
<text x="1397.81" y="589.5" font-size="13.8" fill="#3b4250" font-weight="400" text-anchor="middle" >Very good</text>
<rect x="1516.01" y="422.2" width="84" height="279.3" fill="#fafafa" rx="0" />
<rect x="1516.01" y="422.2" width="1" height="279.3" fill="#ececec" rx="0" />
<text x="1524.41" y="437.6" font-size="10.3" fill="#3b4250" font-weight="400" text-anchor="start" stroke="#3b4250" stroke-width="0.3" >Compared to</text>
<rect x="1517.01" y="445.5" width="83" height="1" fill="#efefef" rx="0" />
<rect x="1517.01" y="497.5" width="83" height="1" fill="#efefef" rx="0" />
<rect x="1517.01" y="565.5" width="83" height="1" fill="#efefef" rx="0" />
<rect x="1517.01" y="634" width="83" height="1" fill="#efefef" rx="0" />
<text x="1524.41" y="468.5" font-size="12" fill="#3b4250" font-weight="400" text-anchor="start" stroke="#3b4250" stroke-width="0.35" >7 days ago</text>
<g transform="translate(1530.21,479.9) scale(0.7733333333333333)"><circle r="7.5" fill="#2f3747"/><circle cx="-4.3" cy="1" r="0.9" fill="#fff"/><circle cx="-3" cy="-3.3" r="0.9" fill="#fff"/><circle cx="0" cy="-4.6" r="0.9" fill="#fff"/><circle cx="4.8" cy="1" r="0.9" fill="#fff"/><path d="M2.8,-3.5 L0.6,1.6" stroke="#fff" stroke-width="1.3" stroke-linecap="round"/><circle cx="0" cy="3" r="1.7" fill="#fff"/></g>
<text x="1540.51" y="484.2" font-size="12" fill="#a3191d" font-weight="400" text-anchor="start" >N/A</text>
<text x="1524.41" y="519.8" font-size="12" fill="#3b4250" font-weight="400" text-anchor="start" stroke="#3b4250" stroke-width="0.35" >30 days ago</text>
<g transform="translate(1530.21,531.3000000000001) scale(0.7733333333333333)"><circle r="7.5" fill="#2f3747"/><circle cx="-4.3" cy="1" r="0.9" fill="#fff"/><circle cx="-3" cy="-3.3" r="0.9" fill="#fff"/><circle cx="0" cy="-4.6" r="0.9" fill="#fff"/><circle cx="4.8" cy="1" r="0.9" fill="#fff"/><path d="M2.8,-3.5 L0.6,1.6" stroke="#fff" stroke-width="1.3" stroke-linecap="round"/><circle cx="0" cy="3" r="1.7" fill="#fff"/></g>
<text x="1540.51" y="535.6" font-size="12" fill="#5a6270" font-weight="400" text-anchor="start" >83.5</text>
<polygon points="1524.41,546.90 1534.21,546.90 1529.31,541.40" fill="#7cc142"/>
<text x="1536.81" y="551.9" font-size="12" fill="#7cc142" font-weight="400" text-anchor="start" stroke="#7cc142" stroke-width="0.35" >8.2</text>
<text x="1524.41" y="587.8" font-size="12" fill="#3b4250" font-weight="400" text-anchor="start" stroke="#3b4250" stroke-width="0.35" >60 days ago</text>
<g transform="translate(1530.21,599.3000000000001) scale(0.7733333333333333)"><circle r="7.5" fill="#2f3747"/><circle cx="-4.3" cy="1" r="0.9" fill="#fff"/><circle cx="-3" cy="-3.3" r="0.9" fill="#fff"/><circle cx="0" cy="-4.6" r="0.9" fill="#fff"/><circle cx="4.8" cy="1" r="0.9" fill="#fff"/><path d="M2.8,-3.5 L0.6,1.6" stroke="#fff" stroke-width="1.3" stroke-linecap="round"/><circle cx="0" cy="3" r="1.7" fill="#fff"/></g>
<text x="1540.51" y="603.6" font-size="12" fill="#5a6270" font-weight="400" text-anchor="start" >78.8</text>
<polygon points="1524.41,614.90 1534.21,614.90 1529.31,609.40" fill="#7cc142"/>
<text x="1536.81" y="619.9" font-size="12" fill="#7cc142" font-weight="400" text-anchor="start" stroke="#7cc142" stroke-width="0.35" >12.9</text>
<text x="1524.41" y="656.5" font-size="12" fill="#3b4250" font-weight="400" text-anchor="start" stroke="#3b4250" stroke-width="0.35" >90 days ago</text>
<g transform="translate(1530.21,667.9000000000001) scale(0.7733333333333333)"><circle r="7.5" fill="#2f3747"/><circle cx="-4.3" cy="1" r="0.9" fill="#fff"/><circle cx="-3" cy="-3.3" r="0.9" fill="#fff"/><circle cx="0" cy="-4.6" r="0.9" fill="#fff"/><circle cx="4.8" cy="1" r="0.9" fill="#fff"/><path d="M2.8,-3.5 L0.6,1.6" stroke="#fff" stroke-width="1.3" stroke-linecap="round"/><circle cx="0" cy="3" r="1.7" fill="#fff"/></g>
<text x="1540.51" y="672.2" font-size="12" fill="#5a6270" font-weight="400" text-anchor="start" >76.2</text>
<polygon points="1524.41,683.30 1534.21,683.30 1529.31,677.80" fill="#7cc142"/>
<text x="1536.81" y="688.3" font-size="12" fill="#7cc142" font-weight="400" text-anchor="start" stroke="#7cc142" stroke-width="0.35" >15.5</text>
<!--TREND-->
<path d="M0,1032 V1026 A6,6 0 0 0 6,1032 Z" fill="#3a3a3e"/><path d="M1624,1032 H1618 A6,6 0 0 0 1624,1026 Z" fill="#2a2a2e"/>
<rect x="270.5" y="718.5" width="1330" height="299" rx="3" fill="#fff" stroke="#e9e9e9"/>
<path d="M270,721.5 a3,3 0 0 1 3,-3 H1598 a3,3 0 0 1 3,3 V749 H270 Z" fill="#efefef"/>
<text x="282.3" y="738.1" font-size="11.6" fill="#2d3340" font-weight="700" text-anchor="start" textLength="58" lengthAdjust="spacingAndGlyphs" >Categories</text>
<text x="343.9" y="738.1" font-size="11.75" fill="#3b4250" font-weight="400" text-anchor="start" textLength="37.2" lengthAdjust="spacingAndGlyphs" >- Trend</text>
<rect x="1577" y="727" width="15" height="15" fill="#5fb383" rx="3" />
<text x="1584.5" y="738.8" font-size="11" fill="#ffffff" font-weight="400" text-anchor="middle" >S</text>
<rect x="332" y="767.5" width="1248.5" height="1" fill="#e6e6e6" rx="0" />
<text x="318.5" y="771" font-size="11.5" fill="#464d59" font-weight="400" text-anchor="end" >150</text>
<rect x="332" y="826.0" width="1248.5" height="1" fill="#e6e6e6" rx="0" />
<text x="318.5" y="829.5" font-size="11.5" fill="#464d59" font-weight="400" text-anchor="end" >100</text>
<rect x="332" y="883.0" width="1248.5" height="1" fill="#e6e6e6" rx="0" />
<text x="318.5" y="886.5" font-size="11.5" fill="#464d59" font-weight="400" text-anchor="end" >50</text>
<rect x="332" y="940" width="1248.5" height="1.2" fill="#d5dae6" rx="0" />
<text x="318.5" y="943.3" font-size="11.5" fill="#464d59" font-weight="400" text-anchor="end" >0</text>
<rect x="385.80" y="940.5" width="1" height="8" fill="#d5dae6" rx="0" />
<text x="386.30" y="956.7" font-size="12" fill="#464d59" font-weight="400" text-anchor="middle" >04/15/2024</text>
<rect x="482.00" y="940.5" width="1" height="8" fill="#d5dae6" rx="0" />
<text x="482.50" y="956.7" font-size="12" fill="#464d59" font-weight="400" text-anchor="middle" >04/22/2024</text>
<rect x="578.20" y="940.5" width="1" height="8" fill="#d5dae6" rx="0" />
<text x="578.70" y="956.7" font-size="12" fill="#464d59" font-weight="400" text-anchor="middle" >04/29/2024</text>
<rect x="674.40" y="940.5" width="1" height="8" fill="#d5dae6" rx="0" />
<text x="674.90" y="956.7" font-size="12" fill="#464d59" font-weight="400" text-anchor="middle" >05/06/2024</text>
<rect x="770.60" y="940.5" width="1" height="8" fill="#d5dae6" rx="0" />
<text x="771.10" y="956.7" font-size="12" fill="#464d59" font-weight="400" text-anchor="middle" >05/13/2024</text>
<rect x="866.80" y="940.5" width="1" height="8" fill="#d5dae6" rx="0" />
<text x="867.30" y="956.7" font-size="12" fill="#464d59" font-weight="400" text-anchor="middle" >05/20/2024</text>
<rect x="963.00" y="940.5" width="1" height="8" fill="#d5dae6" rx="0" />
<text x="963.50" y="956.7" font-size="12" fill="#464d59" font-weight="400" text-anchor="middle" >05/27/2024</text>
<rect x="1059.20" y="940.5" width="1" height="8" fill="#d5dae6" rx="0" />
<text x="1059.70" y="956.7" font-size="12" fill="#464d59" font-weight="400" text-anchor="middle" >06/03/2024</text>
<rect x="1155.40" y="940.5" width="1" height="8" fill="#d5dae6" rx="0" />
<text x="1155.90" y="956.7" font-size="12" fill="#464d59" font-weight="400" text-anchor="middle" >06/10/2024</text>
<rect x="1251.60" y="940.5" width="1" height="8" fill="#d5dae6" rx="0" />
<text x="1252.10" y="956.7" font-size="12" fill="#464d59" font-weight="400" text-anchor="middle" >06/17/2024</text>
<rect x="1347.80" y="940.5" width="1" height="8" fill="#d5dae6" rx="0" />
<text x="1348.30" y="956.7" font-size="12" fill="#464d59" font-weight="400" text-anchor="middle" >06/24/2024</text>
<rect x="1444.00" y="940.5" width="1" height="8" fill="#d5dae6" rx="0" />
<text x="1444.50" y="956.7" font-size="12" fill="#464d59" font-weight="400" text-anchor="middle" >07/01/2024</text>
<rect x="1540.20" y="940.5" width="1" height="8" fill="#d5dae6" rx="0" />
<text x="1540.70" y="956.7" font-size="12" fill="#464d59" font-weight="400" text-anchor="middle" >07/08/2024</text>
<polyline points="344.50,834.58 358.26,834.58 372.02,834.58 385.78,860.64 399.54,855.29 413.30,843.57 427.06,848.46 440.82,840.50 454.58,835.60 468.34,842.43 482.10,867.47 495.86,844.71 509.62,847.44 523.38,858.25 537.14,839.47 550.90,840.95 564.66,848.35 578.42,858.71 592.18,848.35 605.94,848.35 619.70,851.88 633.46,842.43 647.22,837.88 660.98,851.31 674.74,869.06 688.50,859.27 702.26,844.94 716.02,847.89 729.78,832.08 743.54,826.50 757.30,826.50 771.06,850.63 784.82,849.37 798.58,846.41 812.34,843.91 826.10,832.65 839.86,838.56 853.62,850.40 867.38,868.61 881.14,858.25 894.90,846.41 908.66,870.54 922.42,841.52 936.18,844.48 949.94,854.38 963.70,872.02 977.46,860.30 991.22,850.40 1004.98,866.56 1018.74,842.43 1032.50,826.73 1046.26,865.65 1060.02,867.58 1073.78,853.36 1087.54,851.88 1101.30,853.81 1115.06,841.98 1128.82,842.43 1142.58,872.48 1156.34,848.35 1170.10,849.37 1183.86,855.29 1197.62,846.87 1211.38,836.74 1225.14,849.37 1238.90,862.23 1252.66,872.02 1266.42,849.37 1280.18,855.29 1293.94,845.50 1307.70,830.14 1321.46,826.50 1335.22,826.50 1348.98,826.50 1362.74,827.64 1376.50,826.50 1390.26,827.64 1404.02,826.50 1417.78,828.21 1431.54,826.50 1445.30,827.64 1459.06,834.12 1472.82,826.73 1486.58,831.05 1500.34,826.50 1514.10,826.50 1527.86,826.50 1541.62,826.50 1555.38,826.50 1569.14,867.13" fill="none" stroke="#9a72c4" stroke-width="2" stroke-linejoin="round"/>
<polyline points="344.50,834.58 358.26,834.58 372.02,836.06 385.78,841.07 399.54,837.08 413.30,835.72 427.06,834.58 440.82,834.58 454.58,835.60 468.34,841.64 482.10,838.56 495.86,836.63 509.62,836.51 523.38,836.51 537.14,834.58 550.90,834.58 564.66,841.52 578.42,838.56 592.18,835.60 605.94,834.58 619.70,834.58 633.46,834.58 647.22,835.60 660.98,841.52 674.74,836.06 688.50,836.06 702.26,836.06 716.02,836.06 729.78,833.56 743.54,832.65 757.30,832.65 771.06,841.29 784.82,837.99 798.58,837.99 812.34,838.56 826.10,836.51 839.86,837.08 853.62,837.08 867.38,837.99 881.14,837.08 894.90,837.99 908.66,836.06 922.42,833.56 936.18,835.03 949.94,836.06 963.70,837.08 977.46,836.06 991.22,836.06 1004.98,837.08 1018.74,834.58 1032.50,828.21 1046.26,842.43 1060.02,838.56 1073.78,836.74 1087.54,834.58 1101.30,835.60 1115.06,839.02 1128.82,833.56 1142.58,836.06 1156.34,837.99 1170.10,836.51 1183.86,837.99 1197.62,841.52 1211.38,834.47 1225.14,835.03 1238.90,836.51 1252.66,838.56 1266.42,834.58 1280.18,836.51 1293.94,841.52 1307.70,844.48 1321.46,844.48 1335.22,844.48 1348.98,837.54 1362.74,840.16 1376.50,833.56 1390.26,840.04 1404.02,836.51 1417.78,844.94 1431.54,844.94 1445.30,854.38 1459.06,858.25 1472.82,842.43 1486.58,847.89 1500.34,836.06 1514.10,844.94 1527.86,845.96 1541.62,834.58 1555.38,837.54 1569.14,848.35" fill="none" stroke="#5cc0c6" stroke-width="2" stroke-linejoin="round"/>
<polyline points="344.50,839.02 358.26,836.74 372.02,834.58 385.78,842.43 399.54,840.16 413.30,839.02 427.06,840.61 440.82,839.02 454.58,837.42 468.34,834.58 482.10,841.52 495.86,841.64 509.62,839.47 523.38,840.50 537.14,838.56 550.90,837.99 564.66,835.60 578.42,841.52 592.18,840.04 605.94,839.02 619.70,839.02 633.46,838.34 647.22,837.08 660.98,835.60 674.74,840.04 688.50,840.95 702.26,841.98 716.02,841.52 729.78,839.02 743.54,837.99 757.30,840.04 771.06,842.20 784.82,842.43 798.58,840.95 812.34,840.50 826.10,843.91 839.86,838.56 853.62,836.51 867.38,841.52 881.14,842.43 894.90,840.50 908.66,840.04 922.42,838.34 936.18,837.99 949.94,836.51 963.70,841.52 977.46,839.02 991.22,839.02 1004.98,840.04 1018.74,839.02 1032.50,836.51 1046.26,837.99 1060.02,841.52 1073.78,842.43 1087.54,840.50 1101.30,841.52 1115.06,842.43 1128.82,837.99 1142.58,836.06 1156.34,841.52 1170.10,841.52 1183.86,843.46 1197.62,844.48 1211.38,839.02 1225.14,838.56 1238.90,838.56 1252.66,840.50 1266.42,838.56 1280.18,841.98 1293.94,845.96 1307.70,845.96 1321.46,832.08 1335.22,832.08 1348.98,837.54 1362.74,844.48 1376.50,838.56 1390.26,838.56 1404.02,839.02 1417.78,832.65 1431.54,832.08 1445.30,858.25 1459.06,866.56 1472.82,846.41 1486.58,854.84 1500.34,839.02 1514.10,832.08 1527.86,832.08 1541.62,837.99 1555.38,837.99 1569.14,832.08" fill="none" stroke="#e07fb3" stroke-width="2" stroke-linejoin="round"/>
<polyline points="344.50,878.96 358.26,839.02 372.02,838.56 385.78,878.96 399.54,877.03 413.30,882.94 427.06,882.94 440.82,896.71 454.58,896.71 468.34,896.71 482.10,896.71 495.86,896.71 509.62,887.84 523.38,889.77 537.14,889.77 550.90,882.38 564.66,874.98 578.42,868.04 592.18,874.52 605.94,874.52 619.70,876.91 633.46,876.91 647.22,826.50 660.98,826.50 674.74,889.77 688.50,876.91 702.26,868.04 716.02,869.52 729.78,865.65 743.54,826.50 757.30,826.50 771.06,865.19 784.82,865.87 798.58,873.50 812.34,856.32 826.10,856.32 839.86,826.50 853.62,826.50 867.38,856.77 881.14,856.77 894.90,850.40 908.66,857.23 922.42,857.79 936.18,826.50 949.94,845.16 963.70,867.13 977.46,859.27 991.22,839.02 1004.98,838.56 1018.74,826.50 1032.50,826.50 1046.26,826.50 1060.02,826.50 1073.78,826.50 1087.54,826.50 1101.30,838.56 1115.06,839.02 1128.82,826.50 1142.58,835.60 1156.34,845.96 1170.10,845.96 1183.86,839.02 1197.62,844.94 1211.38,838.56 1225.14,826.50 1238.90,826.50 1252.66,838.56 1266.42,838.56 1280.18,839.02 1293.94,834.58" fill="none" stroke="#f3d27a" stroke-width="2" stroke-linejoin="round"/>
<rect x="680" y="989" width="14.5" height="2" fill="#9a72c4" rx="0" />
<text x="700.3" y="994" font-size="11.7" fill="#3a6a8e" font-weight="400" text-anchor="start" >StabilityScore</text>
<rect x="791" y="989" width="15.5" height="2" fill="#5cc0c6" rx="0" />
<text x="812.3" y="994" font-size="11.7" fill="#3a6a8e" font-weight="400" text-anchor="start" >PerformanceScore</text>
<rect x="930" y="989" width="15.5" height="2" fill="#e07fb3" rx="0" />
<text x="951.3" y="994" font-size="11.7" fill="#3a6a8e" font-weight="400" text-anchor="start" >ResponsivenessScore</text>
<rect x="1084.8" y="989" width="15.200000000000045" height="2" fill="#f3d27a" rx="0" />
<text x="1105.8" y="994" font-size="11.7" fill="#3a6a8e" font-weight="400" text-anchor="start" >SentimentScore</text>
</svg></body></html>
